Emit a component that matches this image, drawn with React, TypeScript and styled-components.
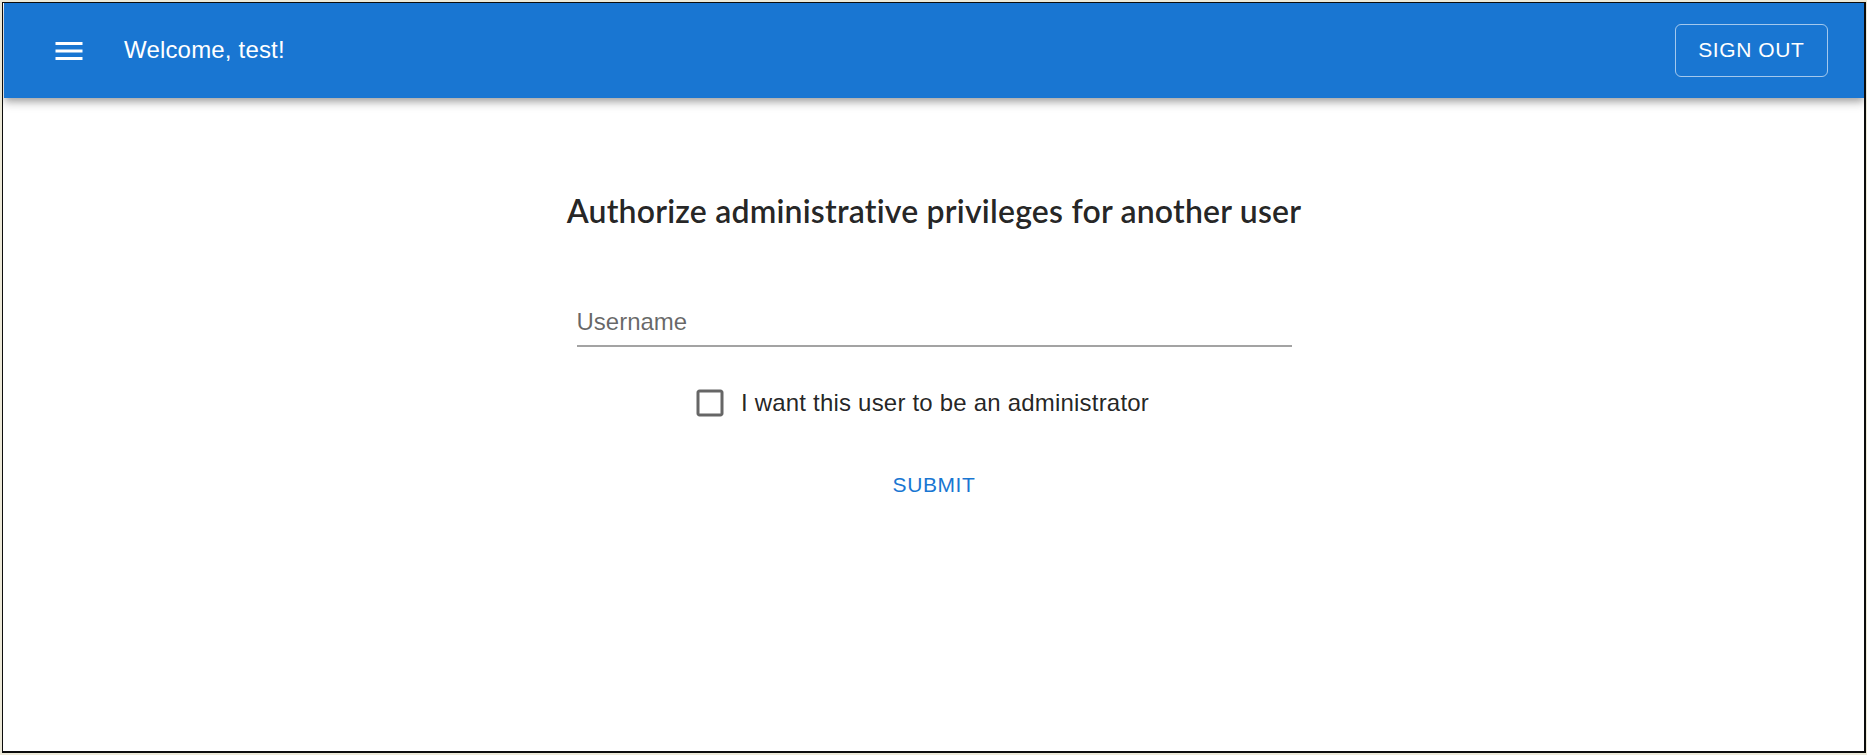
import React from 'react'
import styled, { createGlobalStyle } from 'styled-components'
import { MdMenu, MdCheckBoxOutlineBlank } from 'react-icons/md'

export default function App() {
    return (
        <>
            <GlobalStyle />
            <Window>
                <Bar>
                    <MenuButton aria-label="menu"><MdMenu size={36} /></MenuButton>
                    <Welcome>Welcome, test!</Welcome>
                    <Spacer />
                    <OutlineButton>Sign out</OutlineButton>
                </Bar>
                <Main>
                    <Title>Authorize administrative privileges for another user</Title>
                    <Field placeholder="Username" />
                    <CheckRow>
                        <CheckBox><MdCheckBoxOutlineBlank size={36} /></CheckBox>
                        <CheckLabel>I want this user to be an administrator</CheckLabel>
                    </CheckRow>
                    <TextButton>Submit</TextButton>
                </Main>
            </Window>
        </>
    )
}

const GlobalStyle = createGlobalStyle`
    html, body, #root {
        height: 100%;
    }

    body {
        margin: 0;
        padding: 2px 1px 2px 2px;
        box-sizing: border-box;
        background: #ece9d8;
        font-family: "Liberation Sans", Arial, sans-serif;
    }

    *, *::before, *::after {
        box-sizing: border-box;
    }
`

const Window = styled.div`
    height: 100%;
    display: flex;
    flex-direction: column;
    background: #fff;
    border-style: solid;
    border-color: #0c0c0c;
    border-width: 1px 2px 2px 1px;
    padding-left: 1px;
    overflow: hidden;
`

const Bar = styled.header`
    position: relative;
    z-index: 1;
    height: 95px;
    flex-shrink: 0;
    display: flex;
    align-items: center;
    padding: 0 36px 0 47px;
    background: #1976d2;
    color: #fff;
    box-shadow: 0 3px 6px -1.5px rgba(0, 0, 0, 0.2),
        0 6px 7.5px 0 rgba(0, 0, 0, 0.14),
        0 1.5px 15px 0 rgba(0, 0, 0, 0.12);
`

const MenuButton = styled.button`
    width: 36px;
    height: 36px;
    padding: 0;
    display: flex;
    border: none;
    background: none;
    color: inherit;
`

const Welcome = styled.div`
    margin-left: 37px;
    font-size: 24px;
    line-height: 1.6;
    letter-spacing: 0.18px;
`

const Spacer = styled.div`
    flex: 1;
`

const OutlineButton = styled.button`
    padding: 7.5px 22.5px;
    border: 1px solid rgba(255, 255, 255, 0.6);
    border-radius: 6px;
    background: transparent;
    color: #fff;
    font-family: inherit;
    font-size: 21px;
    line-height: 1.75;
    letter-spacing: 0.6px;
    text-transform: uppercase;
`

const Main = styled.main`
    display: flex;
    flex-direction: column;
    align-items: center;
    padding-top: 93px;
`

const Title = styled.h1`
    margin: 0;
    font-family: Lato, "Open Sans", sans-serif;
    font-weight: 600;
    font-size: 32px;
    line-height: 40px;
    letter-spacing: 0.2px;
    color: rgba(0, 0, 0, 0.87);
`

const Field = styled.input`
    margin-top: 70px;
    width: 715px;
    height: 46px;
    padding: 7px 0 10px;
    border: none;
    border-bottom: 2px solid #a3a3a3;
    outline: none;
    font-family: inherit;
    font-size: 24px;
    color: rgba(0, 0, 0, 0.87);

    &::placeholder {
        color: rgba(0, 0, 0, 0.6);
        opacity: 1;
    }
`

const CheckRow = styled.label`
    margin-top: 24px;
    margin-right: 41px;
    height: 63px;
    display: flex;
    align-items: center;
`

const CheckBox = styled.span`
    width: 63px;
    height: 63px;
    padding: 13.5px;
    display: flex;
    color: rgba(0, 0, 0, 0.6);
`

const CheckLabel = styled.span`
    font-size: 24px;
    line-height: 1.5;
    letter-spacing: 0.2px;
    color: rgba(0, 0, 0, 0.87);
`

const TextButton = styled.button`
    margin-top: 24px;
    padding: 9px 12px;
    border: none;
    background: none;
    color: #1976d2;
    font-family: inherit;
    font-size: 21px;
    line-height: 1.75;
    letter-spacing: 0.6px;
    text-transform: uppercase;
`
